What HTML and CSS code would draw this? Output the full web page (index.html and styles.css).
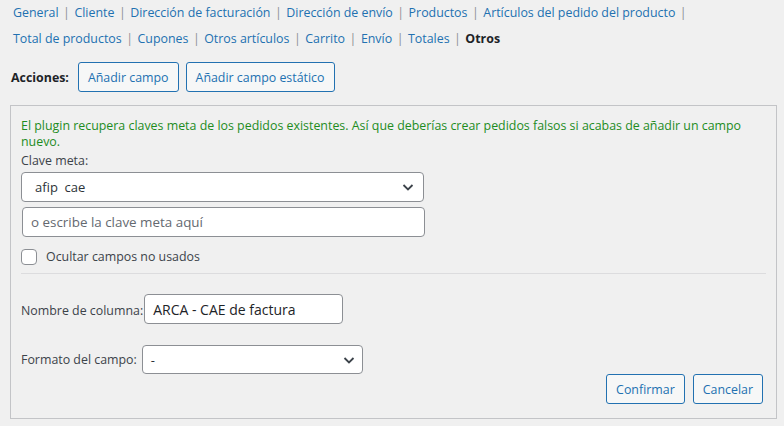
FILE: index.html
```html
<!DOCTYPE html>
<html lang="es">
<head>
<meta charset="utf-8">
<link rel="stylesheet" href="styles.css">
</head>
<body>
<nav class="tabs">
  <a href="#">General</a><span class="sep">|</span><a href="#">Cliente</a><span class="sep">|</span><a href="#">Dirección de facturación</a><span class="sep">|</span><a href="#">Dirección de envío</a><span class="sep">|</span><a href="#">Productos</a><span class="sep">|</span><a href="#">Artículos del pedido del producto</a><span class="sep">|</span><br><a href="#">Total de productos</a><span class="sep">|</span><a href="#">Cupones</a><span class="sep">|</span><a href="#">Otros artículos</a><span class="sep">|</span><a href="#">Carrito</a><span class="sep">|</span><a href="#">Envío</a><span class="sep">|</span><a href="#">Totales</a><span class="sep">|</span><strong class="current">Otros</strong>
</nav>
<div class="actions">
  <span class="actions-label">Acciones:</span>
  <button class="btn">Añadir campo</button>
  <button class="btn">Añadir campo estático</button>
</div>
<section class="panel">
  <p class="notice">El plugin recupera claves meta de los pedidos existentes. Así que deberías crear pedidos falsos si acabas de añadir un campo nuevo.</p>
  <label class="label">Clave meta:</label>
  <div class="select wide"><span class="select-value">afip&nbsp;&nbsp;cae</span><svg class="chev" width="14" height="14" viewBox="0 0 14 14"><path d="M2.5 5 L7 9.5 L11.5 5" fill="none" stroke="#3c434a" stroke-width="1.8"/></svg></div>
  <div class="input wide placeholder">o escribe la clave meta aquí</div>
  <label class="check"><span class="box"></span>Ocultar campos no usados</label>
  <hr class="rule">
  <div class="row row-name"><span class="row-label">Nombre de columna:</span><div class="input name">ARCA - CAE de factura</div></div>
  <div class="row row-format"><span class="row-label">Formato del campo:</span><div class="select format"><span class="select-value">-</span><svg class="chev" width="14" height="14" viewBox="0 0 14 14"><path d="M2.5 5 L7 9.5 L11.5 5" fill="none" stroke="#3c434a" stroke-width="1.8"/></svg></div></div>
  <div class="footer">
    <button class="btn">Confirmar</button>
    <button class="btn">Cancelar</button>
  </div>
</section>
</body>
</html>
```
FILE: styles.css
```css
html, body {
  margin: 0;
  padding: 0;
  background: #f0f0f0;
}
body {
  font-family: "Open Sans", "Noto Sans", sans-serif;
  font-size: 12.4px;
  color: #3c434a;
  width: 784px;
  height: 426px;
  overflow: hidden;
}
.tabs {
  padding: 0 0 0 13px;
  line-height: 26px;
}
.tabs a {
  color: #2271b1;
  text-decoration: none;
}
.tabs .sep {
  color: #8c8f94;
  margin: 0 4.5px;
}
.tabs .current {
  color: #1d2327;
  font-weight: 700;
}
.actions {
  display: flex;
  align-items: center;
  gap: 7px;
  margin: 10px 0 0 11px;
}
.actions-label {
  font-weight: 700;
  color: #1d2327;
  margin-right: 2px;
}
.btn {
  font-family: inherit;
  font-size: 12.4px;
  color: #2271b1;
  background: #f6f7f7;
  border: 1px solid #2271b1;
  border-radius: 3px;
  height: 30px;
  padding: 0 9px;
  cursor: pointer;
}
.panel {
  margin: 13px 7px 0 10px;
  border: 1px solid #c3c4c7;
  height: 314px;
  padding: 12px 10px 0 10px;
  box-sizing: border-box;
  display: flex;
  flex-direction: column;
  align-items: flex-start;
}
.notice {
  margin: 0;
  color: #1e8c1e;
  line-height: 16px;
  width: 740px;
}
.label {
  margin-top: 3px;
  line-height: 16px;
}
.select, .input {
  box-sizing: border-box;
  height: 30px;
  border: 1px solid #8c8f94;
  border-radius: 4px;
  background: #fff;
  display: flex;
  align-items: center;
  color: #2c3338;
}
.wide {
  width: 403px;
}
.select {
  justify-content: space-between;
  padding: 0 8px 0 13px;
}
.select-value {
  white-space: pre;
  font-size: 13px;
}
.chev {
  display: block;
}
.select.wide {
  margin-top: 3px;
}
.input.wide {
  margin-top: 5px;
  margin-left: 1px;
  padding-left: 8px;
  font-size: 13.4px;
}
.placeholder {
  color: #646970;
}
.check {
  display: flex;
  align-items: center;
  gap: 9px;
  margin-top: 12px;
  line-height: 16px;
}
.box {
  width: 14px;
  height: 14px;
  border: 1px solid #8c8f94;
  border-radius: 4px;
  background: #fff;
}
.rule {
  align-self: stretch;
  margin: 8px 0 0 0;
  border: 0;
  border-top: 1px solid #dcdcde;
}
.row {
  display: flex;
  align-items: center;
}
.row-name {
  margin-top: 20px;
}
.row-format {
  margin-top: 21px;
}
.row-label {
  line-height: 16px;
}
.row-name .row-label {
  padding-top: 4px;
}
.input.name {
  width: 199px;
  margin-left: 1px;
  padding-left: 8px;
  font-size: 14px;
  color: #1d2327;
}
.select.format {
  width: 221px;
  height: 29px;
  margin-left: 5px;
  padding: 0 6px 0 8px;
}
.footer {
  align-self: stretch;
  display: flex;
  justify-content: flex-end;
  gap: 8px;
  margin-top: 0;
  padding-right: 3px;
}
.footer .btn {
  padding: 0 9px;
}
```
